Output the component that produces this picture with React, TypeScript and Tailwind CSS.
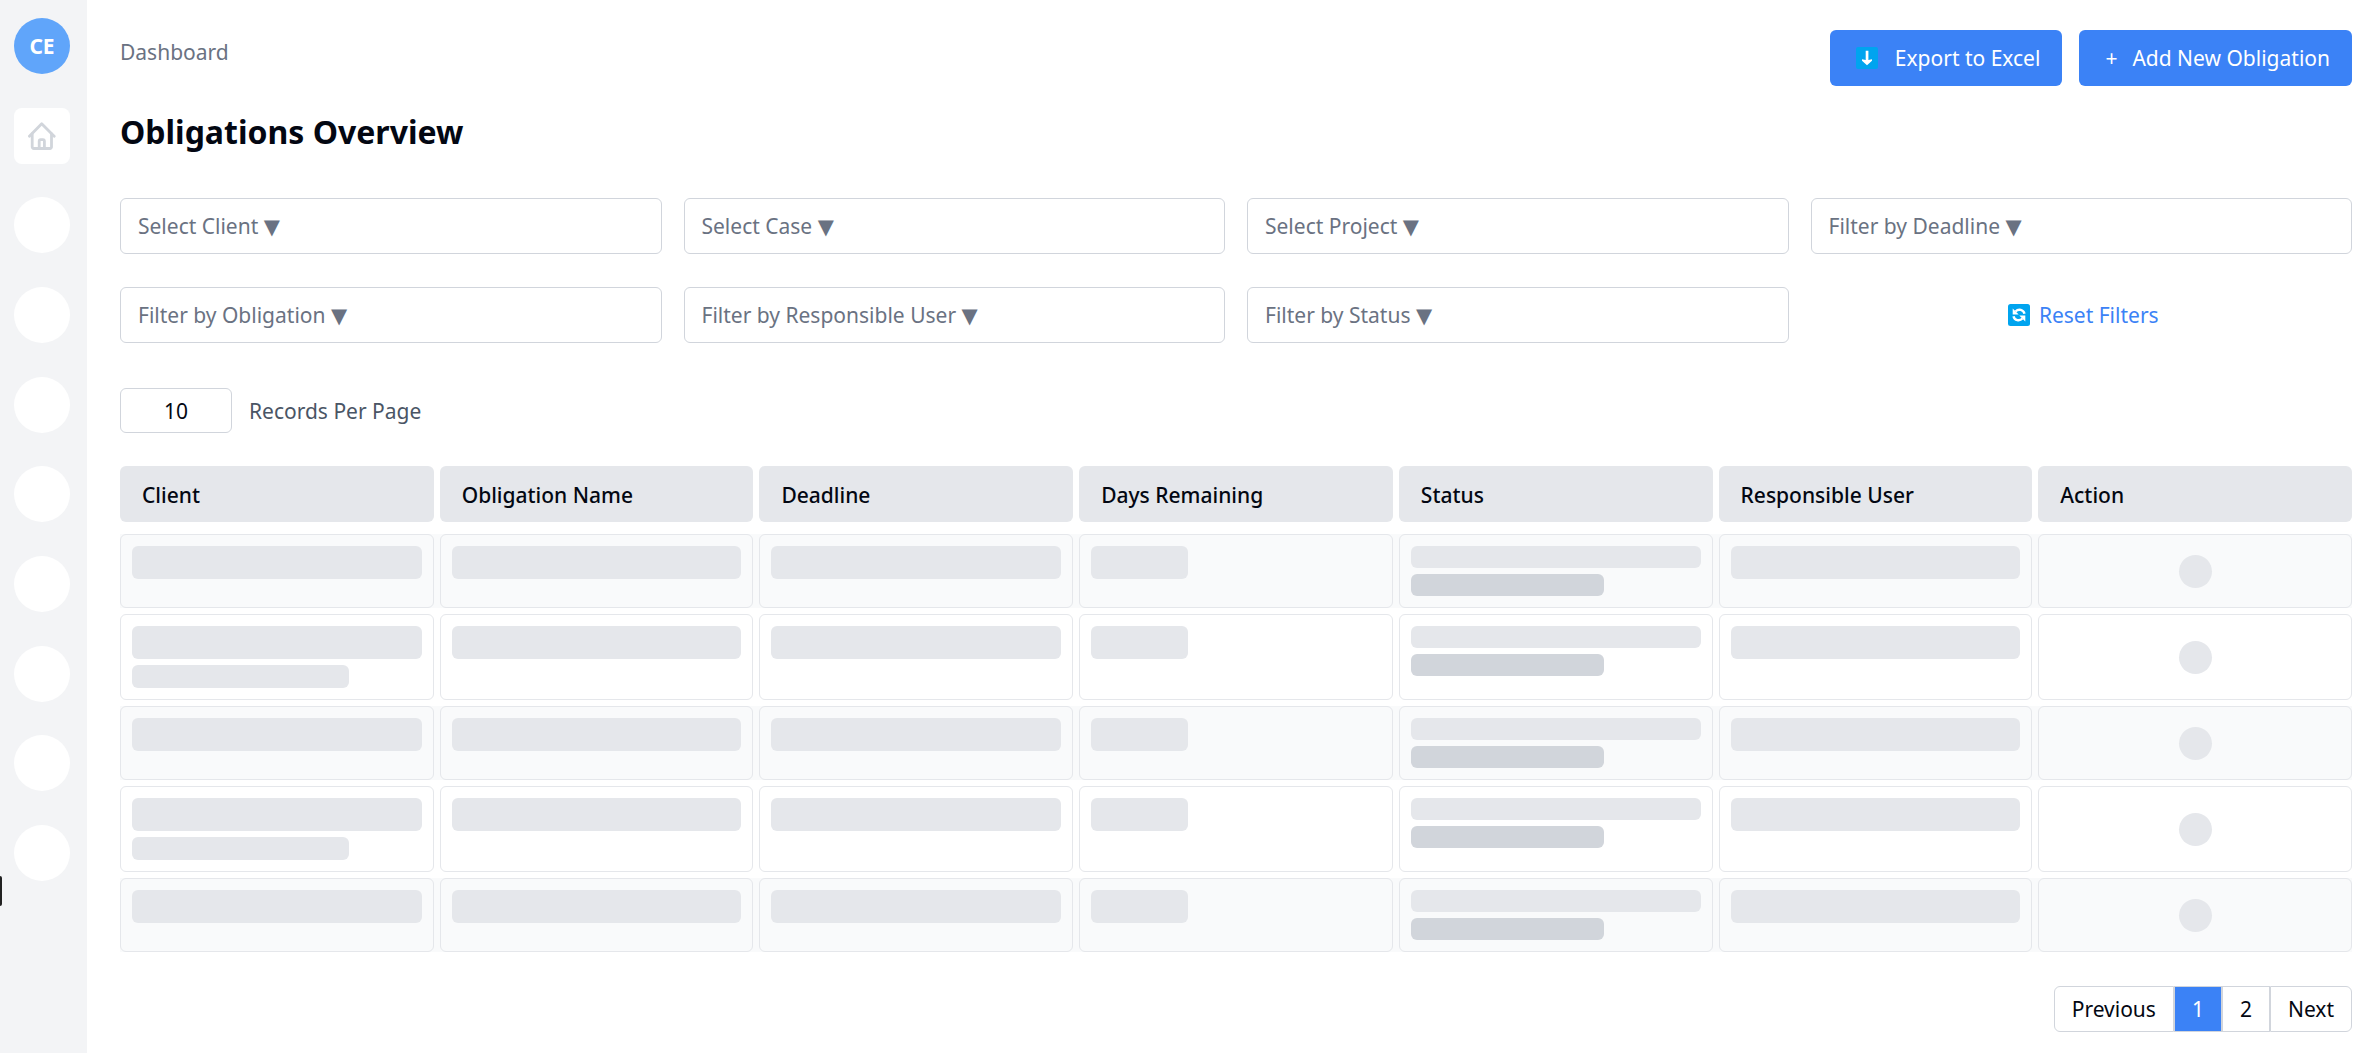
const filters = [
  { id: "client", label: "Select Client" },
  { id: "case", label: "Select Case" },
  { id: "project", label: "Select Project" },
  { id: "deadline", label: "Filter by Deadline" },
  { id: "obligation", label: "Filter by Obligation" },
  { id: "responsible", label: "Filter by Responsible User" },
  { id: "status", label: "Filter by Status" },
];

const columns = ["Client", "Obligation Name", "Deadline", "Days Remaining", "Status", "Responsible User", "Action"];

const rows = [1, 2, 3, 4, 5];

function HomeIcon() {
  return (
    <svg viewBox="0 0 28 28" className="h-7 w-7" fill="none" stroke="#d1d5db" strokeWidth="2.8" strokeLinecap="round" strokeLinejoin="round" aria-hidden="true">
      <path d="M1.4 14.2 13.7 1.8 26.2 14.2" />
      <path d="M4.2 12v13a1.5 1.5 0 0 0 1.5 1.5h16.3a1.5 1.5 0 0 0 1.5-1.5V12" />
      <path d="M11.2 26v-6.8a1.5 1.5 0 0 1 1.5-1.5h2.2a1.5 1.5 0 0 1 1.5 1.5V26" />
    </svg>
  );
}

function DownloadIcon() {
  return (
    <svg viewBox="0 0 22 22" className="h-[22px] w-[22px]" aria-hidden="true">
      <rect width="22" height="22" rx="2" fill="#00a4ef" />
      <path d="M9.7 3.7h2.700v9.300l3.600-.8v1.600L11 18.200l-5-4.400v-1.600l3.700.8z" fill="#fff" />
    </svg>
  );
}

function RefreshIcon() {
  return (
    <svg viewBox="0 0 22 22" className="h-[22px] w-[22px]" aria-hidden="true">
      <rect width="22" height="22" rx="2.5" fill="#00a4ef" />
      <path d="M7.5 7.5C10.5 4.5 15.5 5.5 16.5 9.8" fill="none" stroke="#fff" strokeWidth="2.4" />
      <path d="M14.5 14.5C11.5 17.5 6.5 16.5 5.5 12.2" fill="none" stroke="#fff" strokeWidth="2.4" />
      <path d="M4.7 4.5v6h6zM17.3 17.5v-6h-6z" fill="#fff" />
    </svg>
  );
}

function Sidebar() {
  return (
    <aside className="w-[87px] shrink-0 bg-gray-100 pl-[14px] pt-[18px]">
      <nav className="flex h-[863px] flex-col justify-between">
        <button className="h-14 w-14 rounded-full bg-[#60a5fa] text-[21px] font-bold text-white">CE</button>
        <a href="#home" aria-label="Home" className="flex h-14 w-14 items-center justify-center rounded-lg bg-white">
          <HomeIcon />
        </a>
        {[1, 2, 3, 4, 5, 6, 7, 8].map((n) => (
          <div key={n} className="h-14 w-14 rounded-full bg-white" />
        ))}
      </nav>
    </aside>
  );
}

function SkeletonCell({ column, tall }: { column: string; tall: boolean }) {
  if (column === "Action") {
    return (
      <td className="flex items-center justify-center rounded-md border border-gray-200">
        <div className="h-[33px] w-[33px] rounded-full bg-gray-200" />
      </td>
    );
  }
  if (column === "Status") {
    return (
      <td className="rounded-md border border-gray-200 p-[11px]">
        <div className="h-[22px] rounded-md bg-gray-200" />
        <div className="mt-1.5 h-[22px] w-2/3 rounded-md bg-[#d1d5db]" />
      </td>
    );
  }
  return (
    <td className="rounded-md border border-gray-200 p-[11px]">
      <div className={`h-[33px] rounded-md bg-gray-200 ${column === "Days Remaining" ? "w-1/3" : ""}`} />
      {column === "Client" && tall && <div className="mt-1.5 h-[23px] w-3/4 rounded-md bg-gray-200" />}
    </td>
  );
}

export default function App() {
  return (
    <div className="relative flex min-h-screen bg-white font-['Noto_Sans','DejaVu_Sans',sans-serif] text-[21px] leading-8 text-gray-950">
      <Sidebar />
      <div className="absolute left-0 top-[876px] h-[30px] w-0.5 rounded-r-sm bg-[#222222]" />

      <main className="min-w-0 flex-1 pl-[33px] pr-[23px] pt-[30px]">
        {/* Page header */}
        <header className="flex items-start justify-between">
          <div>
            <p className="mt-1.5 text-gray-500">Dashboard</p>
            <h1 className="mt-11 text-[32px] font-bold leading-10">Obligations Overview</h1>
          </div>
          <div className="flex gap-[17px]">
            <button className="flex h-14 items-center gap-[17px] rounded-md bg-[#3b82f6] pl-[26px] pr-[22px] text-white">
              <DownloadIcon />
              Export to Excel
            </button>
            <button className="flex h-14 items-center gap-[15px] rounded-md bg-[#3b82f6] pl-[26px] pr-[22px] text-white">
              <span>+</span>
              Add New Obligation
            </button>
          </div>
        </header>

        {/* Filters */}
        <div className="mt-[46px] grid grid-cols-4 gap-x-[22px] gap-y-[33px]">
          {filters.map((f) => (
            <select key={f.id} aria-label={f.label} className="h-14 appearance-none rounded-md border border-gray-300 bg-white px-[17px] text-gray-500">
              <option>{f.label} ▼</option>
            </select>
          ))}
          <button className="flex h-14 items-center justify-center gap-[9px] pl-1 text-[#3b82f6]">
            <RefreshIcon />
            Reset Filters
          </button>
        </div>

        <div className="mt-[45px] flex items-center gap-[17px]">
          <input id="page-size" defaultValue="10" className="h-[45px] w-28 rounded-md border border-gray-300 text-center" />
          <label htmlFor="page-size" className="text-gray-600">
            Records Per Page
          </label>
        </div>

        {/* Table, still loading */}
        <table className="mt-[33px] block">
          <thead className="block">
            <tr className="grid grid-cols-7 gap-1.5">
              {columns.map((c) => (
                <th key={c} className="rounded-md bg-gray-200 px-[22px] pb-[11px] pt-[13px] text-left font-medium">
                  {c}
                </th>
              ))}
            </tr>
          </thead>
          <tbody className="mt-3 flex flex-col gap-1.5">
            {rows.map((r) => (
              <tr key={r} className={`grid grid-cols-7 gap-1.5 ${r % 2 ? "bg-gray-50" : "bg-white"}`}>
                {columns.map((c) => (
                  <SkeletonCell key={c} column={c} tall={r % 2 === 0} />
                ))}
              </tr>
            ))}
          </tbody>
        </table>

        {/* Pagination */}
        <div className="my-[34px] flex justify-end">
          <button className="h-[46px] rounded-l-md border border-gray-300 px-[17px]">Previous</button>
          <button className="h-[46px] border border-gray-300 bg-[#3b82f6] px-[17px] text-white">1</button>
          <button className="h-[46px] border border-gray-300 px-[17px]">2</button>
          <button className="h-[46px] rounded-r-md border border-gray-300 px-[17px]">Next</button>
        </div>
      </main>
    </div>
  );
}
